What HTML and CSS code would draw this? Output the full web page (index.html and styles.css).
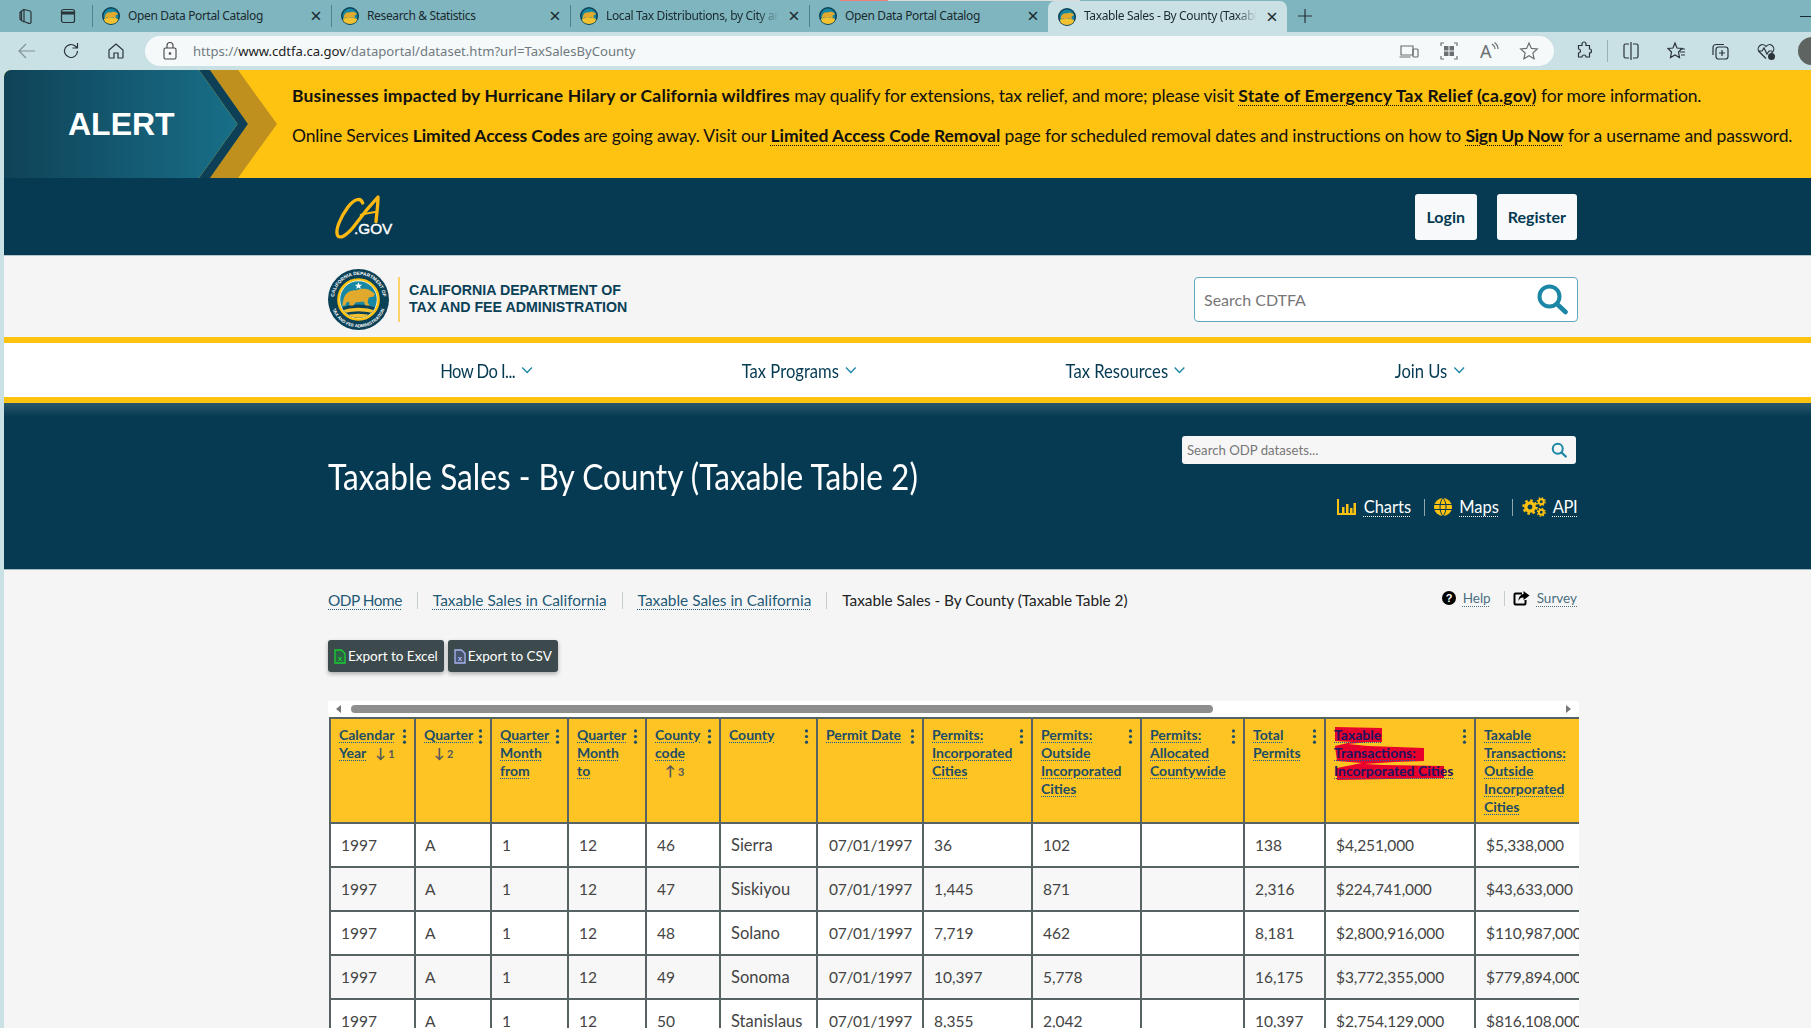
FILE: index.html
```html
<!DOCTYPE html>
<html lang="en">
<head>
<meta charset="utf-8">
<title>Taxable Sales - By County (Taxable Table 2)</title>
<link rel="stylesheet" href="styles.css">
</head>
<body>
<svg class="defs" width="0" height="0" aria-hidden="true">
  <defs>
    <clipPath id="innerClip"><circle cx="30" cy="30" r="18"/></clipPath>
    <symbol id="medal" viewBox="0 0 60 60">
      <circle cx="30" cy="30" r="19.8" fill="#fff" stroke="#fec210" stroke-width="2.4"/>
      <circle cx="30" cy="30" r="18" fill="#1787a3"/>
      <g clip-path="url(#innerClip)">
        <path d="M8 40 Q30 30 52 40 V52 H8Z" fill="#0b4157"/>
        <path d="M10 42 Q30 34 50 42 L50 45 Q30 38 10 45Z" fill="#f2c230"/>
        <path d="M12 47 Q30 41 48 47 V53 H12Z" fill="#f2c230"/>
      </g>
      <path d="M15 31C16 24 22 20 28 21C33 19 38 19 41 21L46 24L45 27L40 28L39 33L41 36H37L35 32L27 33L25 36H21L21 32L18 33L17 36H14Z" fill="#e2aa2c"/>
      <polygon points="30,13 31,15.500 33.600,15.500 31.500,17.100 32.300,19.700 30,18.200 27.700,19.700 28.500,17.100 26.400,15.500 29,15.500" fill="#fff"/>
    </symbol>
    <symbol id="favicon" viewBox="0 0 60 60">
      <circle cx="30" cy="30" r="30" fill="#0b4157"/>
      <circle cx="30" cy="30" r="25" fill="#1787a3"/>
      <path d="M6 40 Q30 28 54 40 L50 50 Q30 64 10 50Z" fill="#f2c230"/>
      <path d="M10 30C13 20 21 17 29 18C36 15 43 15 47 18L53 21L51 26L46 27L45 34L47 38H42L39 33L27 34L24 38H18L18 33L15 34L13 38H9Z" fill="#e2aa2c"/>
    </symbol>
    <symbol id="kebab" viewBox="0 0 4 16">
      <circle cx="2" cy="2" r="1.7"/><circle cx="2" cy="8" r="1.7"/><circle cx="2" cy="14" r="1.7"/>
    </symbol>
    <symbol id="lens" viewBox="0 0 32 32">
      <circle cx="13.5" cy="13.5" r="10" fill="none" stroke="currentColor" stroke-width="4"/>
      <path d="M21 21l8.5 8" fill="none" stroke="currentColor" stroke-width="4.6" stroke-linecap="round"/>
    </symbol>
    <symbol id="gear" viewBox="0 0 20 20">
      <circle cx="10" cy="10" r="5.2" fill="none" stroke="#fec210" stroke-width="4.2"/>
      <circle cx="10" cy="10" r="8.2" fill="none" stroke="#fec210" stroke-width="3" stroke-dasharray="3.2 3.24"/>
    </symbol>
  </defs>
</svg>

<div class="progress"><span class="progress-red"></span><span class="progress-grey"></span></div>

<header class="tabstrip">
  <div class="workspace">
    <svg class="ico" viewBox="0 0 20 20"><path d="M7 3.5l6 1.5a1.5 1.5 0 0 1 1 1.4V16a1.5 1.5 0 0 1-2 1.4l-4-1.4a1.5 1.5 0 0 1-1-1.4V3.5zM7 3.5 4.5 5v9.5l2.5 1.5M4.5 5 3 6.5v6.5l1.5 1.5"/></svg>
    <svg class="ico" viewBox="0 0 20 20"><rect x="3.5" y="3.5" width="13" height="13" rx="2"/><path d="M3.5 7h13" stroke-width="3"/></svg>
  </div>
  <div class="tab"><i class="tab-sep"></i><svg class="fav"><use href="#favicon"/></svg><span class="tab-title">Open Data Portal Catalog</span><span class="tab-x">×</span></div>
  <div class="tab"><i class="tab-sep"></i><svg class="fav"><use href="#favicon"/></svg><span class="tab-title">Research &amp; Statistics</span><span class="tab-x">×</span></div>
  <div class="tab"><i class="tab-sep"></i><svg class="fav"><use href="#favicon"/></svg><span class="tab-title tab-fade">Local Tax Distributions, by City and County</span><span class="tab-x">×</span></div>
  <div class="tab tab-last"><i class="tab-sep"></i><svg class="fav"><use href="#favicon"/></svg><span class="tab-title">Open Data Portal Catalog</span><span class="tab-x">×</span></div>
  <div class="tab tab-active"><svg class="fav"><use href="#favicon"/></svg><span class="tab-title tab-fade">Taxable Sales - By County (Taxable Table 2)</span><span class="tab-x">×</span></div>
  <svg class="ico plus" viewBox="0 0 20 20"><path d="M10 3v14M3 10h14"/></svg>
  <span class="minimize"></span>
</header>

<div class="toolbar">
  <svg class="ico ico-dim" viewBox="0 0 20 20"><path d="M18 10H2M9 3l-7 7 7 7"/></svg>
  <svg class="ico t-refresh" viewBox="0 0 20 20"><path d="M16.5 10a6.5 6.5 0 1 1-2-4.7L16.5 7M16.5 2v5h-5"/></svg>
  <svg class="ico t-home" viewBox="0 0 20 20"><path d="M3 9l7-6 7 6v7a1 1 0 0 1-1 1h-4v-5H8v5H4a1 1 0 0 1-1-1z"/></svg>
  <div class="omnibox">
    <svg class="ico-lock" viewBox="0 0 16 20"><rect x="2" y="7" width="12" height="11" rx="1.5"/><path d="M5 7V4.500a3 3 0 0 1 6 0V7"/><circle cx="8" cy="12.500" r="0.800"/></svg>
    <span class="url">https://<b>www.cdtfa.ca.gov</b>/dataportal/dataset.htm?url=TaxSalesByCounty</span>
    <span class="omni-icons">
      <svg class="ico ico-soft" viewBox="0 0 20 20"><path d="M2 5h12v9H2zM0.500 16h11"/><rect x="14" y="8" width="5" height="8" rx="1"/></svg>
      <svg class="ico ico-soft" viewBox="0 0 20 20"><path d="M2 5V2h3M15 2h3v3M18 15v3h-3M5 18H2v-3"/><rect class="solid" x="5" y="5" width="4.500" height="4.500"/><rect class="solid" x="10.500" y="5" width="4.500" height="4.500"/><rect class="solid" x="5" y="10.500" width="4.500" height="4.500"/><rect class="solid" x="10.500" y="10.500" width="4.500" height="4.500"/></svg>
      <svg class="ico ico-soft" viewBox="0 0 20 20"><text class="read-a" x="1" y="17">A</text><path d="M13 3q3 2 3 5M15.500 1.500q3.500 2.500 3.500 6.500"/></svg>
      <svg class="ico ico-soft" viewBox="0 0 20 20"><polygon points="10,2 12.400,7.400 18.300,8 13.900,12 15.100,17.800 10,14.800 4.900,17.800 6.100,12 1.700,8 7.600,7.400"/></svg>
    </span>
  </div>
  <svg class="ico t-ext" viewBox="0 0 20 20"><path d="M8 3a2 2 0 0 1 4 0v1.500h3.500V8a2 2 0 0 1 0 4v4H12a2 2 0 0 0-4 0H4.500v-4a2 2 0 0 0 0-4V4.500H8z"/></svg>
  <i class="t-sep"></i>
  <svg class="ico t-split" viewBox="0 0 20 20"><path d="M8 3H4.500A1.500 1.500 0 0 0 3 4.500v11A1.500 1.500 0 0 0 4.500 17H8M12 3h3.500A1.500 1.500 0 0 1 17 4.500v11a1.500 1.500 0 0 1-1.500 1.500H12M10 1v18"/></svg>
  <svg class="ico t-fav" viewBox="0 0 20 20"><path d="M9 2l2 5 5 .5-3.500 3.500 1 5.500L9 14l-4.500 2.500 1-5.500L2 7.500 7 7zM14 11h5M15 14h4M14 8h5"/></svg>
  <svg class="ico t-coll" viewBox="0 0 20 20"><rect x="6" y="6" width="12" height="12" rx="2.500"/><path d="M12 9v6M9 12h6M14 3.500H6a3 3 0 0 0-3 3V14"/></svg>
  <svg class="ico t-heart" viewBox="0 0 20 20"><path d="M10 17.500L3 10.500a4.200 4.200 0 0 1 7-5 4.200 4.200 0 0 1 7 5l-1.500 1.500M2 10h4l2-3 3 6 2-3h3"/><circle class="solid" cx="15.500" cy="15.500" r="3.500"/></svg>
  <span class="avatar"></span>
</div>

<main class="page">
  <section class="alert">
    <div class="flag">
      <svg class="flag-art" viewBox="1 0 273 108" width="273" height="108">
        <defs><linearGradient id="flagGrad" x1="0" x2="1" y1="0" y2="0"><stop offset="0" stop-color="#0f4257"/><stop offset="1" stop-color="#186f88"/></linearGradient></defs>
        <polygon points="207,0 235,0 274,54 235,108 207,108 245,54" fill="#c0901f"/>
        <polygon points="196,0 207,0 245,54 207,108 196,108 234.500,54" fill="#0d4056"/>
        <polygon points="0,0 196,0 234.500,54 196,108 0,108" fill="url(#flagGrad)"/>
      </svg>
      <strong class="flag-text">ALERT</strong>
    </div>
    <div class="alert-body">
      <p><b>Businesses impacted by Hurricane Hilary or California wildfires</b> may qualify for extensions, tax relief, and more; please visit <a class="alert-link" href="#">State of Emergency Tax Relief (ca.gov)</a> for more information.</p>
      <p class="alert-two">Online Services <b>Limited Access Codes</b> are going away. Visit our <a class="alert-link" href="#">Limited Access Code Removal</a> page for scheduled removal dates and instructions on how to <a class="alert-link alert-sign" href="#">Sign Up Now</a> for a username and password.</p>
    </div>
  </section>

  <section class="topbar">
    <div class="wrap topbar-in">
      <svg class="ca-logo" viewBox="0 0 225 165" width="75" height="55">
        <path class="ca-stroke" d="M110 42C104 24 84 30 66 54C44 84 28 120 34 138C40 152 62 140 84 112L120 65L156 24C156 50 152 72 150 98"/>
        <path class="ca-stroke ca-bar" d="M104 78C120 72 140 70 154 68"/>
        <text class="ca-gov" x="84" y="136">.GOV</text>
      </svg>
      <div class="auth">
        <a class="auth-btn" href="#">Login</a>
        <a class="auth-btn" href="#">Register</a>
      </div>
    </div>
  </section>

  <section class="brand">
    <div class="wrap brand-in">
      <div class="brand-logo">
        <svg class="seal" viewBox="0 0 60 60" width="61" height="61">
          <circle cx="30" cy="30" r="30" fill="#0b4157"/>
          <path id="sealTop" d="M5.800 30a24.200 24.200 0 0 1 48.400 0" fill="none"/>
          <path id="sealBottom" d="M2.600 30a27.400 27.400 0 0 0 54.800 0" fill="none"/>
          <text class="seal-text"><textPath href="#sealTop" startOffset="50%" text-anchor="middle">CALIFORNIA DEPARTMENT OF</textPath></text>
          <text class="seal-text seal-small"><textPath href="#sealBottom" startOffset="50%" text-anchor="middle">TAX AND FEE ADMINISTRATION</textPath></text>
          <use href="#medal" width="60" height="60"/>
        </svg>
        <i class="brand-rule"></i>
        <div class="brand-name">CALIFORNIA DEPARTMENT OF<br>TAX AND FEE ADMINISTRATION</div>
      </div>
      <div class="site-search">
        <span class="site-search-ph">Search CDTFA</span>
        <svg class="lens-big"><use href="#lens"/></svg>
      </div>
    </div>
  </section>

  <nav class="mainnav">
    <div class="wrap nav-in">
      <a class="nav-first" href="#">How Do I... <svg class="chev" viewBox="0 0 12 8" preserveAspectRatio="none"><path d="M1 1.500l5 5 5-5"/></svg></a>
      <a href="#">Tax Programs <svg class="chev" viewBox="0 0 12 8" preserveAspectRatio="none"><path d="M1 1.500l5 5 5-5"/></svg></a>
      <a href="#">Tax Resources <svg class="chev" viewBox="0 0 12 8" preserveAspectRatio="none"><path d="M1 1.500l5 5 5-5"/></svg></a>
      <a href="#">Join Us <svg class="chev" viewBox="0 0 12 8" preserveAspectRatio="none"><path d="M1 1.500l5 5 5-5"/></svg></a>
    </div>
  </nav>

  <section class="hero">
    <div class="wrap hero-in">
      <h1>Taxable Sales - By County (Taxable Table 2)</h1>
      <div class="hero-side">
        <div class="odp-search">
          <span class="odp-ph">Search ODP datasets...</span>
          <svg class="lens-small"><use href="#lens"/></svg>
        </div>
        <div class="hero-links">
          <svg class="hero-ico" viewBox="0 0 20 18" width="20" height="18"><path d="M1 1v15h18" fill="none" stroke="#fec210" stroke-width="2"/><path d="M5 9h2.500v6H5zM9 6h2.500v9H9zM13 10h2.500v5H13zM16.500 5H19v10h-2.500z" fill="#fec210"/></svg>
          <a href="#">Charts</a><i class="hero-sep"></i>
          <svg class="hero-ico" viewBox="0 0 18 18" width="18" height="18"><circle cx="9" cy="9" r="9" fill="#fec210"/><path d="M0 6.500h18M0 11.500h18M9 0C5 4 5 14 9 18M9 0c4 4 4 14 0 18" fill="none" stroke="#053a52" stroke-width="1"/></svg>
          <a href="#">Maps</a><i class="hero-sep"></i>
          <svg class="hero-ico gears" viewBox="0 0 24 20" width="24" height="20"><use href="#gear" x="0" y="2" width="16" height="16"/><use href="#gear" x="14.500" y="0" width="9.500" height="9.500"/><use href="#gear" x="14.500" y="10.500" width="9.500" height="9.500"/></svg>
          <a class="hero-api" href="#">API</a>
        </div>
      </div>
    </div>
  </section>

  <section class="content">
    <div class="wrap">
      <div class="crumb-row">
        <ol class="crumbs">
          <li class="crumb-home"><a href="#">ODP Home</a></li>
          <li><a href="#">Taxable Sales in California</a></li>
          <li><a href="#">Taxable Sales in California</a></li>
          <li class="crumb-now">Taxable Sales - By County (Taxable Table 2)</li>
        </ol>
        <div class="help">
          <svg viewBox="0 0 14 14" width="14" height="14"><circle cx="7" cy="7" r="7" fill="#000"/><text class="q" x="7" y="11">?</text></svg>
          <a href="#">Help</a><i class="help-sep"></i>
          <svg viewBox="0 0 17 15" width="17" height="15"><path d="M9 2.500H2.500a1 1 0 0 0-1 1v9a1 1 0 0 0 1 1h9a1 1 0 0 0 1-1V9" fill="none" stroke="#000" stroke-width="2"/><path d="M10.500 0l6 4.500-6 4.500V6.500C8 6.500 6.500 7.500 5.500 10c0-4 2-6.500 5-7z" fill="#000"/></svg>
          <a href="#">Survey</a>
        </div>
      </div>

      <div class="exports">
        <a class="export" href="#"><svg class="doc doc-x" viewBox="0 0 12 15" width="12" height="15"><path d="M1 1h6.500L11 4.500V14H1z"/><text x="6" y="12">x</text></svg>Export to Excel</a>
        <a class="export" href="#"><svg class="doc doc-c" viewBox="0 0 12 15" width="12" height="15"><path d="M1 1h6.500L11 4.500V14H1z"/><text x="6" y="12">x</text></svg>Export to CSV</a>
      </div>

      <div class="scrollbar">
        <span class="arrow-l"></span>
        <span class="thumb"></span>
        <span class="arrow-r"></span>
      </div>

      <div class="table-clip">
        <table class="grid">
          <colgroup>
            <col class="c1"><col class="c2"><col class="c3"><col class="c4"><col class="c5"><col class="c6"><col class="c7"><col class="c8"><col class="c9"><col class="c10"><col class="c11"><col class="c12"><col class="c13">
          </colgroup>
          <thead>
            <tr>
              <th><div class="th-in"><span class="lbl"><a href="#">Calendar</a><br><a href="#">Year</a><span class="sort s1">↓ <small>1</small></span></span><svg class="keb"><use href="#kebab"/></svg></div></th>
              <th><div class="th-in"><span class="lbl"><a href="#">Quarter</a><br><span class="sort s2">↓ <small>2</small></span></span><svg class="keb"><use href="#kebab"/></svg></div></th>
              <th><div class="th-in"><span class="lbl"><a href="#">Quarter</a><br><a href="#">Month</a><br><a href="#">from</a></span><svg class="keb"><use href="#kebab"/></svg></div></th>
              <th><div class="th-in"><span class="lbl"><a href="#">Quarter</a><br><a href="#">Month</a><br><a href="#">to</a></span><svg class="keb"><use href="#kebab"/></svg></div></th>
              <th><div class="th-in"><span class="lbl"><a href="#">County</a><br><a href="#">code</a><br><span class="sort s3">↑ <small>3</small></span></span><svg class="keb"><use href="#kebab"/></svg></div></th>
              <th><div class="th-in"><span class="lbl"><a href="#">County</a></span><svg class="keb"><use href="#kebab"/></svg></div></th>
              <th><div class="th-in"><span class="lbl"><a href="#">Permit Date</a></span><svg class="keb"><use href="#kebab"/></svg></div></th>
              <th><div class="th-in"><span class="lbl"><a href="#">Permits:</a><br><a href="#">Incorporated</a><br><a href="#">Cities</a></span><svg class="keb"><use href="#kebab"/></svg></div></th>
              <th><div class="th-in"><span class="lbl"><a href="#">Permits:</a><br><a href="#">Outside</a><br><a href="#">Incorporated</a><br><a href="#">Cities</a></span><svg class="keb"><use href="#kebab"/></svg></div></th>
              <th><div class="th-in"><span class="lbl"><a href="#">Permits:</a><br><a href="#">Allocated</a><br><a href="#">Countywide</a></span><svg class="keb"><use href="#kebab"/></svg></div></th>
              <th><div class="th-in"><span class="lbl"><a href="#">Total</a><br><a href="#">Permits</a></span><svg class="keb"><use href="#kebab"/></svg></div></th>
              <th class="th-marked">
                <svg class="scribble" viewBox="0 0 112 53" width="112" height="53"><path d="M1 0L48 1V15H33L14 17L34 19L90 21V34L60 35L30 37L50 38L110 39V51L3 53V41L28 36L3 34L1 19L18 15L1 14Z" fill="#e8002d"/></svg>
                <div class="th-in"><span class="lbl lbl-marked"><a href="#">Taxable</a><br><a href="#">Transactions:</a><br><a href="#">Incorporated Cities</a></span><svg class="keb"><use href="#kebab"/></svg></div>
              </th>
              <th><div class="th-in"><span class="lbl"><a href="#">Taxable</a><br><a href="#">Transactions:</a><br><a href="#">Outside</a><br><a href="#">Incorporated</a><br><a href="#">Cities</a></span></div></th>
            </tr>
          </thead>
          <tbody>
            <tr><td>1997</td><td>A</td><td>1</td><td>12</td><td>46</td><td>Sierra</td><td>07/01/1997</td><td>36</td><td>102</td><td></td><td>138</td><td>$4,251,000</td><td>$5,338,000</td></tr>
            <tr><td>1997</td><td>A</td><td>1</td><td>12</td><td>47</td><td>Siskiyou</td><td>07/01/1997</td><td>1,445</td><td>871</td><td></td><td>2,316</td><td>$224,741,000</td><td>$43,633,000</td></tr>
            <tr><td>1997</td><td>A</td><td>1</td><td>12</td><td>48</td><td>Solano</td><td>07/01/1997</td><td>7,719</td><td>462</td><td></td><td>8,181</td><td>$2,800,916,000</td><td>$110,987,000</td></tr>
            <tr><td>1997</td><td>A</td><td>1</td><td>12</td><td>49</td><td>Sonoma</td><td>07/01/1997</td><td>10,397</td><td>5,778</td><td></td><td>16,175</td><td>$3,772,355,000</td><td>$779,894,000</td></tr>
            <tr><td>1997</td><td>A</td><td>1</td><td>12</td><td>50</td><td>Stanislaus</td><td>07/01/1997</td><td>8,355</td><td>2,042</td><td></td><td>10,397</td><td>$2,754,129,000</td><td>$816,108,000</td></tr>
          </tbody>
        </table>
      </div>
    </div>
  </section>
</main>
</body>
</html>
```
FILE: styles.css
```css
* { box-sizing: border-box; }
html, body { margin: 0; height: 1028px; overflow: hidden; }
body {
  position: relative;
  background: #c9e0e4;
  font-family: Lato, "Noto Sans", sans-serif;
  color: #222;
}
a { color: inherit; }
i { display: block; }
.defs { position: absolute; }

/* Browser chrome */
.progress { position: absolute; left: 840px; top: 0; display: flex; height: 1px; z-index: 3; }
.progress-red { width: 48px; background: #f08080; }
.progress-grey { width: 192px; background: #dcdcdc; }

.tabstrip {
  display: flex;
  align-items: center;
  height: 32px;
  background: #7fb5be;
  overflow: hidden;
}
.ico { width: 20px; height: 20px; flex: none; fill: none; stroke: #2a3338; stroke-width: 1.2; }
.ico .solid { fill: #2a3338; stroke: none; }
.workspace { display: flex; width: 92px; padding-left: 17px; gap: 21px; flex: none; }
.tab { display: flex; align-items: center; width: 239px; height: 32px; flex: none; }
.tab-sep { width: 1px; height: 22px; background: #4f808c; }
.fav { width: 18px; height: 18px; margin-left: 9px; flex: none; }
.tab-title { flex: 1; min-width: 0; margin-left: 8px; padding-bottom: 2px; font-family: "Noto Sans", sans-serif; font-size: 12px; letter-spacing: -.36px; color: #1a2a30; white-space: nowrap; overflow: hidden; }
.tab-fade { -webkit-mask-image: linear-gradient(90deg, #000 88%, transparent); mask-image: linear-gradient(90deg, #000 88%, transparent); }
.tab-x { width: 14px; margin: 0 8px 0 8px; font-family: "Noto Sans", sans-serif; font-size: 20px; line-height: 20px; text-align: center; color: #1a2a30; }
.tab-last { border-bottom-right-radius: 6px; }
.tab-active { background: #c9e0e4; height: 31px; margin-top: 1px; border-radius: 7px 7px 0 0; }
.tab-active .fav { margin-left: 10px; }
.plus { margin-left: 8px; }
.minimize { margin-left: auto; width: 11px; height: 1px; background: #1a2a30; }

.toolbar {
  display: flex;
  align-items: center;
  height: 38px;
  padding-left: 17px;
  background: #c9e0e4;
  overflow: hidden;
}
.ico-dim { stroke: #7f9298; }
.t-refresh { margin-left: 24px; }
.t-home { margin-left: 25px; }
.omnibox {
  display: flex;
  align-items: center;
  flex: none;
  width: 1409px;
  height: 30px;
  margin-left: 19px;
  padding: 0 15px 0 17px;
  border-radius: 15px;
  background: #f5f9fa;
}
.ico-lock { width: 16px; height: 20px; fill: none; stroke: #444; stroke-width: 1.1; flex: none; }
.url { margin-left: 15px; font-family: "Noto Sans", sans-serif; font-size: 13.1px; color: #707a80; }
.url b { font-weight: 400; color: #222; }
.omni-icons { display: flex; gap: 20px; margin-left: auto; }
.ico-soft { stroke: #6b6f72; }
.ico-soft .solid { fill: #6b6f72; }
.read-a { font-family: "Noto Sans", sans-serif; font-size: 18px; fill: #6b6f72; stroke: none; }
.t-ext { margin-left: 20px; }
.t-sep { width: 1px; height: 22px; margin-left: 13px; background: #9ab0b5; flex: none; }
.t-split { margin-left: 13px; }
.t-fav { margin-left: 25px; }
.t-coll { margin-left: 24px; }
.t-heart { margin-left: 26px; }
.avatar { width: 28px; height: 28px; margin-left: 22px; border-radius: 50%; background: #5e6461; flex: none; }

/* Page */
.page {
  margin-left: 4px;
  height: 958px;
  overflow: hidden;
  background: #f5f5f5;
  border-top-left-radius: 7px;
}
.wrap { width: 1249px; margin-left: 324px; }

.alert { display: flex; height: 108px; background: #fec210; }
.flag { display: grid; width: 273px; flex: none; }
.flag > * { grid-area: 1 / 1; }
.flag-text {
  padding-left: 64px;
  align-self: center;
  font-family: "Liberation Sans", sans-serif;
  font-size: 32px;
  font-weight: 700;
  color: #fff;
}
.alert-body { margin-left: 15px; padding-top: 14px; font-size: 17.5px; letter-spacing: -.15px; white-space: nowrap; color: #111; }
.alert-body p { margin: 0 0 16px; line-height: 24px; }
.alert-body b, .alert-link { font-weight: 700; letter-spacing: .18px; }
.alert-link { text-decoration: underline dotted 1px; text-underline-offset: 3px; }
.alert-two { letter-spacing: -.16px; }
.alert-two b, .alert-two .alert-link { letter-spacing: -.05px; }
.alert-two .alert-sign { letter-spacing: -.3px; }

.topbar { height: 77px; background: #053a52; }
.topbar-in { display: flex; align-items: center; justify-content: space-between; height: 100%; }
.ca-logo { margin-left: -2px; }
.ca-stroke { fill: none; stroke: #fdb813; stroke-width: 10; stroke-linecap: round; stroke-linejoin: round; }
.ca-bar { stroke-width: 6; }
.ca-gov { font-family: "Liberation Sans", sans-serif; font-size: 46px; fill: #fff; stroke: #fff; stroke-width: 1.3; }
.auth { display: flex; gap: 20px; }
.auth-btn {
  display: flex;
  align-items: center;
  justify-content: center;
  height: 46px;
  min-width: 62px;
  padding: 0 11px;
  border-radius: 3px;
  background: #f7f9fb;
  font-size: 16px;
  font-weight: 700;
  color: #053a52;
  text-decoration: none;
}

.brand { height: 88px; padding-top: 5px; border-top: 1px solid #b7c6cc; border-bottom: 6px solid #fec210; background: #f5f5f5; }
.brand-in { display: flex; align-items: center; justify-content: space-between; height: 100%; }
.brand-logo { display: flex; align-items: center; }
.seal-text { font-family: "Liberation Sans", sans-serif; font-size: 4.7px; font-weight: 700; fill: #fff; }
.seal-small { font-size: 4.3px; }
.brand-rule { width: 2px; height: 45px; margin-left: 9px; background: #fdd36a; }
.brand-name {
  margin-left: 9px;
  font-family: "Liberation Sans", sans-serif;
  font-size: 14.2px;
  font-weight: 700;
  line-height: 17.5px;
  color: #0b4157;
}
.site-search {
  display: flex;
  align-items: center;
  justify-content: space-between;
  width: 384px;
  height: 45px;
  margin-right: -1px;
  padding: 0 9px;
  border: 1px solid #5fa8bd;
  border-radius: 4px;
  background: #fff;
}
.site-search-ph { font-size: 16px; color: #777; }
.lens-big { width: 32px; height: 32px; color: #1b86a6; }

.mainnav {
  height: 60px;
  background: #fff;
  border-bottom: 6px solid #fec210;
}
.nav-in {
  display: flex;
  justify-content: center;
  align-items: center;
  gap: 252px;
  height: 100%;
  font-size: 20px;
  color: #053a52;
  transform: scaleX(.83);
}
.nav-in a { text-decoration: none; display: flex; align-items: center; gap: 7px; white-space: nowrap; }
.nav-in .nav-first { letter-spacing: -.7px; }
.chev { width: 14px; height: 8px; fill: none; stroke: #1b86a6; stroke-width: 1.400; }

.hero {
  height: 167px;
  background: linear-gradient(#2a566c, #053a52 14px);
  border-bottom: 1px solid #a3bac4;
}
.hero-in { display: flex; justify-content: space-between; align-items: flex-start; padding-top: 33px; }
h1 {
  margin: 17px 0 0;
  font-size: 37px;
  font-weight: 400;
  line-height: 46px;
  color: #fff;
  white-space: nowrap;
  transform: scaleX(.854);
  transform-origin: left center;
}
.hero-side { display: flex; flex-direction: column; align-items: flex-end; }
.odp-search {
  display: flex;
  align-items: center;
  justify-content: space-between;
  width: 394px;
  height: 28px;
  margin-right: 1px;
  padding: 0 9px 0 5px;
  border-radius: 3px;
  background: #f6f6f6;
}
.odp-ph { font-size: 13.2px; color: #777; }
.lens-small { width: 16px; height: 16px; color: #1b86a6; }
.hero-links { display: flex; align-items: center; height: 24px; margin-top: 31px; font-size: 16.5px; color: #fff; }
.hero-links a { text-decoration: underline dotted 1px; text-underline-offset: 3px; }
.hero-links .hero-api { letter-spacing: -.5px; }
.hero-ico { margin-right: 7px; }
.hero-sep { width: 1px; height: 17px; margin: 0 9px 0 13px; background: #8ea6b0; }

.crumb-row { display: flex; justify-content: space-between; align-items: center; height: 24px; margin-top: 18px; }
.crumbs { display: flex; list-style: none; margin: 0; padding: 0; font-size: 15.4px; color: #1f5a77; }
.crumbs li { padding-right: 15px; margin-right: 15px; border-right: 1px solid #c4ccd0; line-height: 17px; }
.crumbs a { text-decoration: underline dotted 1px; text-underline-offset: 3px; }
.crumbs .crumb-home { letter-spacing: -.5px; }
.crumbs .crumb-now { color: #222; border: 0; letter-spacing: -.05px; }
.help { display: flex; align-items: center; font-size: 13.5px; color: #4a6f80; margin-top: -4px; }
.help a { margin-left: 7px; text-decoration: underline dotted 1px; text-underline-offset: 3px; }
.help-sep { width: 1px; height: 15px; margin: 0 8px 0 13px; background: #c4ccd0; }
.q { font-family: "Liberation Sans", sans-serif; font-size: 11px; font-weight: 700; fill: #fff; text-anchor: middle; }

.exports { display: flex; gap: 4px; margin-top: 28px; }
.export {
  display: flex;
  align-items: center;
  gap: 2px;
  height: 32px;
  padding: 0 6px;
  border-radius: 3px;
  background: #3d4a4d;
  box-shadow: 0 2px 4px rgba(0, 0, 0, .3);
  font-size: 13.5px;
  color: #fff;
  text-decoration: none;
}
.doc path { stroke-width: 1.300; }
.doc text { font-family: "Liberation Sans", sans-serif; font-size: 8px; font-weight: 700; text-anchor: middle; }
.doc-x path { fill: #0a3; stroke: #18d030; fill-opacity: .25; }
.doc-x text { fill: #18d030; }
.doc-c path { fill: #6a7ad0; stroke: #a8b4f0; fill-opacity: .25; }
.doc-c text { fill: #a8b4f0; }

.scrollbar { display: flex; align-items: center; width: 1251px; height: 16px; margin-top: 29px; background: #fff; }
.arrow-l { margin-left: 8px; border: 4px solid transparent; border-left: 0; border-right: 5px solid #777; }
.thumb { width: 862px; height: 8px; margin-left: 10px; border-radius: 4px; background: #8e8e8e; }
.arrow-r { margin-left: auto; margin-right: 8px; border: 4px solid transparent; border-right: 0; border-left: 5px solid #777; }

.table-clip { width: 1251px; overflow: hidden; }
.grid { width: 1270px; table-layout: fixed; border-collapse: collapse; margin-left: 1px; background: #fff; }
.c1 { width: 85px; } .c2 { width: 76px; } .c3 { width: 77px; } .c4 { width: 78px; } .c5 { width: 74px; }
.c6 { width: 97px; } .c7 { width: 106px; } .c8 { width: 109px; } .c9 { width: 109px; } .c10 { width: 103px; }
.c11 { width: 81px; } .c12 { width: 150px; } .c13 { width: 125px; }
.grid th, .grid td { border: 2px solid #566264; }
.grid th {
  height: 105px;
  padding: 7px 7px 0 8px;
  vertical-align: top;
  text-align: left;
  background: #fec424;
  font-size: 14px;
  font-weight: 700;
  line-height: 18px;
  color: #1d4d66;
}
.th-in { display: flex; justify-content: space-between; align-items: flex-start; position: relative; }
.lbl { white-space: nowrap; }
.lbl a { text-decoration: underline dotted 1px #1a5a9a; text-underline-offset: 2px; }
.keb { width: 5px; height: 15px; margin-top: 3px; fill: #1d4d66; flex: none; }
.sort { color: #55585a; font-weight: 700; }
.sort small { font-size: 11px; margin-left: -1px; }
.s1 { margin-left: 9px; }
.s2 { margin-left: 10px; }
.s3 { margin-left: 10px; }
.th-marked { position: relative; }
.scribble { position: absolute; left: 8px; top: 8px; }
.lbl-marked { color: #1c1560; }
.grid td {
  height: 44px;
  padding: 0 0 0 10px;
  font-size: 15.5px;
  color: #444;
  white-space: nowrap;
  overflow: hidden;
}
.grid td:nth-child(2) { padding-left: 9px; }
.grid td:nth-child(6) { font-size: 16.5px; }
.grid td:nth-child(7) { padding-left: 11px; letter-spacing: -.3px; }
.grid td:nth-child(12), .grid td:nth-child(13) { letter-spacing: -.1px; }
.grid tbody tr:nth-child(even) td { background: #f7f7f7; }
```
